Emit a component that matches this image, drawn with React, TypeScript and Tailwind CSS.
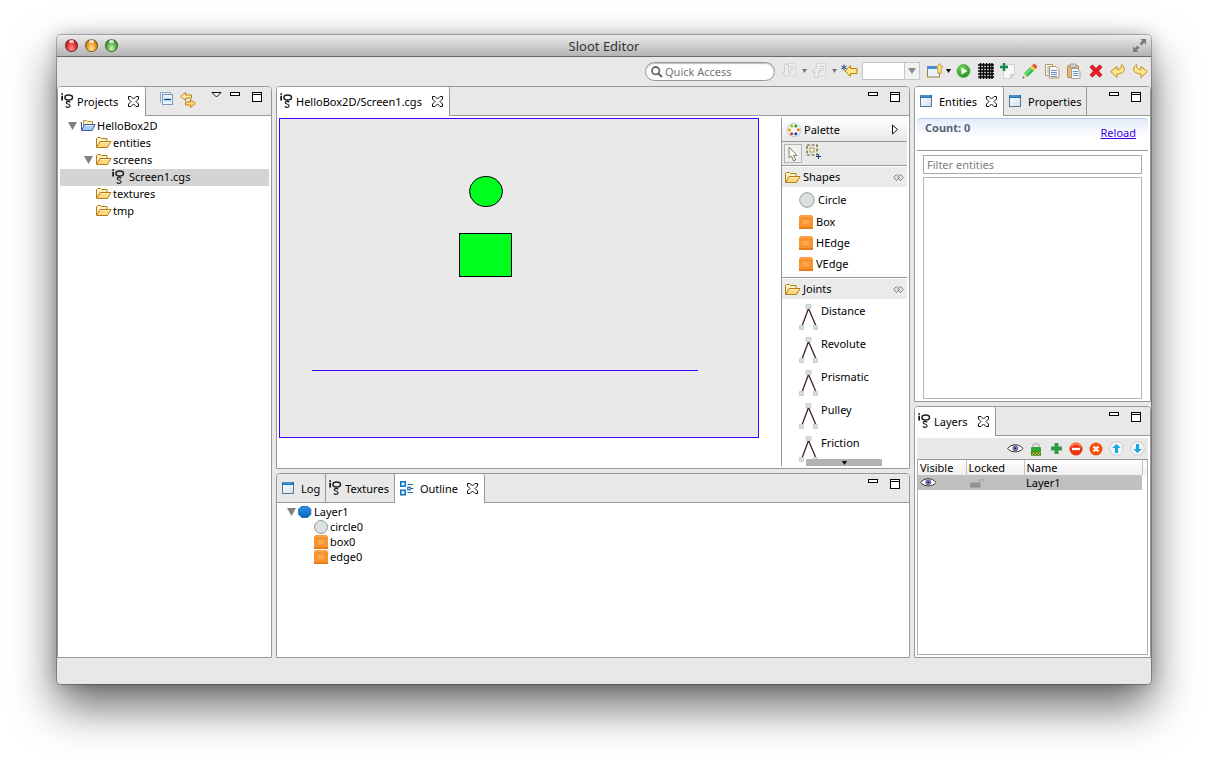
import React from "react";

type Kids = { children?: React.ReactNode };

/* ---------- icons ---------- */

function Svg({ w = 16, h = 16, children }: { w?: number; h?: number } & Kids) {
  return (
    <svg width={w} height={h} viewBox={`0 0 ${w} ${h}`} fill="none" className="block shrink-0" aria-hidden="true">
      {children}
    </svg>
  );
}

const LogoIcon = () => (
  <Svg w={13} h={16}>
    <path d="M.3.300h1.700v1.500H.3zM.3 2.800h1.700v4.700H.3z" fill="#111" />
    <ellipse cx="7.700" cy="4.500" rx="3.800" ry="2.500" stroke="#222" strokeWidth="1.500" />
    <path
      d="M9.200 9.300C8.300 8 5.200 8 5.200 9.700c0 1.600 3.900.900 3.900 3 0 2-3.300 2.300-4.300.700M6.500 7.500l2.500 1.800"
      stroke="#222"
      strokeWidth="1.200"
    />
  </Svg>
);

const WindowIcon = () => (
  <Svg w={13} h={13}>
    <defs>
      <linearGradient id="win" x1="0" y1="0" x2="1" y2="1">
        <stop offset="0" stopColor="#fff" />
        <stop offset="1" stopColor="#cfe0ee" />
      </linearGradient>
    </defs>
    <rect x=".5" y=".5" width="11" height="11" fill="url(#win)" stroke="#5a7896" />
    <path d="M0 0h12v3H0z" fill="#2272b4" />
    <path d="M1 1h9" stroke="#6fb0e4" />
  </Svg>
);

const OutlineIcon = () => (
  <Svg w={14} h={15}>
    <rect x=".75" y=".75" width="4.500" height="4.500" fill="#d9f0ff" stroke="#1277c0" strokeWidth="1.500" />
    <rect x=".75" y="9.250" width="4.500" height="4.500" fill="#d9f0ff" stroke="#1277c0" strokeWidth="1.500" />
    <path d="M7.500 3.500h5.500M7.500 11.500h5.500M11 7.500h2.500" stroke="#1f6cae" />
    <rect x="7.750" y="6.250" width="2.500" height="2.500" stroke="#1f6cae" strokeWidth="1.200" />
  </Svg>
);

const CloseIcon = () => (
  <Svg w={11} h={11}>
    <path
      d="M.5.500h2.500L5.500 3 8 .500h2.500V3L8 5.500l2.500 2.500v2.500H8L5.500 8 3 10.500H.500V8L3 5.500.500 3z"
      fill="#fff"
      stroke="#111"
    />
  </Svg>
);

const FolderIcon = () => (
  <Svg w={16} h={13}>
    <path d="M.500 11V2.500l1-1h3l1 1h5.500V5.500" fill="#fdf0c4" stroke="#b87a14" />
    <path d="M.700 11.500 4 5.500h11l-3.500 6z" fill="#fbd980" stroke="#b87a14" strokeLinejoin="round" />
    <path d="M5 6.500h8.500" stroke="#fff0bc" />
  </Svg>
);

const ProjectIcon = () => (
  <Svg w={16} h={13}>
    <path d="M3.500 6V1.500h3l1 1h5V6" fill="#fdf0c4" stroke="#c09030" />
    <path d="M1.500 11V3.500H.500" stroke="#3c4fa8" />
    <path d="M1.500 11.500 4.500 5.500h10.700l-3 6z" fill="#a9cdf5" stroke="#3c5aa8" strokeLinejoin="round" />
    <path d="M5.500 6.500h7.500" stroke="#e4f1ff" />
  </Svg>
);

const CircleIcon = () => (
  <Svg>
    <circle cx="8" cy="8" r="7.300" fill="#d9e2e0" stroke="#949c9a" />
  </Svg>
);

const SmallCircleIcon = () => (
  <Svg w={14} h={14}>
    <circle cx="7" cy="7" r="6.500" fill="#d9e2e0" stroke="#949c9a" />
  </Svg>
);

const BoxIcon = () => (
  <Svg w={14} h={14}>
    <path d="M1.500 0h11L14 2v12H0V2z" fill="#fa962f" />
    <path d="M0 13h14" stroke="#e87c1a" strokeWidth="2" />
    <path d="M1.500 1h11" stroke="#ffb05c" />
    <rect x="3" y="4" width="8" height="6" fill="#fca94f" stroke="#f4892a" />
  </Svg>
);

const JointIcon = () => (
  <Svg w={20} h={27}>
    <path d="M9.500 4.500 3 22M9.500 4.500 17 22" stroke="#3a2426" strokeWidth="1.300" />
    <path d="M7 .500h5v4H7zM.500 21.500h4v4h-4zM14.500 21.500h4v4h-4z" fill="#d5dedd" stroke="#c4cfce" />
  </Svg>
);

const HexIcon = () => (
  <Svg w={14} h={14}>
    <defs>
      <linearGradient id="hex" x1="0" y1="0" x2="0" y2="1">
        <stop offset="0" stopColor="#2f95e6" />
        <stop offset="1" stopColor="#0a62b4" />
      </linearGradient>
    </defs>
    <path d="M4 1.500h5.500L12.800 4v5.500l-3.300 3H4L.700 9.500V4z" fill="url(#hex)" stroke="#1670c0" />
  </Svg>
);

const EyeIcon = () => (
  <Svg w={17} h={11}>
    <path d="M.700 5.500C4 .500 12.500.500 16 5.500 12.500 10 4 10 .700 5.500z" fill="#fff" stroke="#333" />
    <circle cx="8.300" cy="5.300" r="2.500" fill="#9a86ec" stroke="#444" strokeWidth=".8" />
    <circle cx="8.300" cy="5.300" r="1.100" fill="#1a1060" />
  </Svg>
);

const Expander = () => (
  <Svg w={9} h={8}>
    <path d="M0 0h9L4.500 8z" fill="#808080" />
  </Svg>
);

const Caret = ({ dark = false }: { dark?: boolean }) => (
  <Svg w={5} h={4}>
    <path d="M0 0h5L2.500 4z" fill={dark ? "#000" : "#777"} />
  </Svg>
);

const MinIcon = () => (
  <Svg w={10} h={11}>
    <rect x=".5" y=".5" width="9" height="3" fill="#fff" stroke="#000" />
  </Svg>
);

const MaxIcon = () => (
  <Svg w={10} h={11}>
    <rect x=".5" y=".5" width="9" height="9" fill="#fff" stroke="#000" />
    <path d="M1 2.500h8" stroke="#000" />
  </Svg>
);

const MenuIcon = () => (
  <Svg w={11} h={11}>
    <path d="M1 .500h9L5.500 5z" fill="#fff" stroke="#111" />
  </Svg>
);

const CollapseIcon = () => (
  <Svg w={14} h={14}>
    <path d="M.500 10.500V.500h10v2" fill="#e6eef7" stroke="#8ba7cc" />
    <rect x="2.500" y="2.500" width="10" height="10" fill="#e9f5ff" stroke="#8296b4" />
    <path d="M4 7.500h7" stroke="#0a4f8c" strokeWidth="1.400" />
  </Svg>
);

const LinkIcon = () => (
  <Svg w={17} h={16}>
    <path d="M5.500.500v2.500h6v3h-6v2.500L.700 4.500z" fill="#ffeeb4" stroke="#c08010" />
    <path d="M10.500 7.500V10h-5v3h5v2.500l4.800-4z" fill="#ffdc78" stroke="#c08010" />
  </Svg>
);

const DisabledArrowIcon = ({ up = false }: { up?: boolean }) => (
  <Svg>
    <rect x="5.500" y=".5" width="9" height="12" fill="#eee" stroke="#d8d8d8" />
    <path d="M8 3.500h5M9 5.500h4M9 7.500h4" stroke="#d2d2d2" />
    {up ? (
      <path d="M5.500 4.500 10 9H7.500v5.500h-4V9H1z" fill="#ececec" stroke="#cecece" />
    ) : (
      <path d="M3.500 1.500h4V9H10l-4.500 5L1 9h2.500z" fill="#ececec" stroke="#cecece" />
    )}
  </Svg>
);

const LastEditIcon = () => (
  <Svg w={17} h={14}>
    <path d="M9.500 1.500v3h6.500v5H9.500v3L4 7z" fill="#ffe488" stroke="#bd7e0c" />
    <path d="M3 .500v6M.300 2l5.400 3M5.700 2 .300 5" stroke="#1d4f86" />
  </Svg>
);

const NewWindowIcon = () => (
  <Svg w={17} h={15}>
    <rect x=".5" y="3.500" width="12" height="10.500" fill="#e6f3fc" stroke="#a08040" />
    <path d="M0 3h12v3H0z" fill="#4a90d0" />
    <path
      d="M12.500.500 13.800 3l2.200.800-1.800 1.400v5h-3.400v-5L9 3.800 11.200 3z"
      fill="#ffe680"
      stroke="#b88a1c"
      strokeWidth=".8"
    />
  </Svg>
);

const PlayIcon = () => (
  <Svg>
    <defs>
      <radialGradient id="play" cx=".4" cy=".3" r=".8">
        <stop offset="0" stopColor="#7ed55a" />
        <stop offset="1" stopColor="#148a14" />
      </radialGradient>
    </defs>
    <circle cx="7.500" cy="8" r="6.500" fill="url(#play)" stroke="#4db04a" strokeWidth=".8" />
    <path d="M5.500 4.500v7L11.500 8z" fill="#fff" />
  </Svg>
);

const GridIcon = () => (
  <Svg>
    <path
      d="M2.500 0v16M5.500 0v16M8.500 0v16M11.500 0v16M14 0v16M0 2h16M0 5h16M0 8h16M0 11h16M0 14h16"
      stroke="#000"
      strokeWidth="1.400"
    />
  </Svg>
);

const NewPageIcon = () => (
  <Svg>
    <path d="M3.500 1.500h11v10l-4 4h-7z" fill="#f6f6f4" stroke="#d2d2d0" />
    <path d="M14.500 11.500h-4v4z" fill="#ddd" stroke="#ccc" />
    <path d="M4 0v8M0 4h8" stroke="#0f8a4a" strokeWidth="2.400" />
  </Svg>
);

const PencilIcon = () => (
  <Svg>
    <path d="m2 10.500 7-7 3.500 3.500-7 7z" fill="#2fc04c" />
    <path d="m3.200 11.700 7-7" stroke="#7ee58c" strokeWidth="1.400" />
    <path d="m8.200 4.300 2-2 3.500 3.500-2 2z" fill="#f2d34a" />
    <path d="m10 2.500 1.500-1.500c1-1 4.400 2.400 3.400 3.400L13.500 6z" fill="#e8543a" />
    <path d="m2 10.500 3.500 3.500-4.800 1.300z" fill="#efd6a4" />
    <path d="m1.200 13.500 1.300 1.300-2 .700z" fill="#333" />
  </Svg>
);

const CopyIcon = () => (
  <Svg>
    <path d="M1.500 1.500h7v11h-7z" fill="#fff" stroke="#b29858" />
    <path d="M3 4h4M3 6h4M3 8h4M3 10h4" stroke="#7d9fce" />
    <path d="M5.500 3.500h6.500l3 3v8.500H5.500z" fill="#f4f8fe" stroke="#b29858" />
    <path d="M7 7.500h6M7 9.500h6M7 11.500h6M7 13.500h6" stroke="#6a90c6" />
  </Svg>
);

const PasteIcon = () => (
  <Svg>
    <rect x="1.500" y="2.500" width="11" height="12" rx="1" fill="#e8b873" stroke="#b8853c" />
    <rect x="4" y="1" width="6" height="3.500" rx="1" fill="#d5d5d5" stroke="#888" strokeWidth=".8" />
    <path d="M5.500 5.500h6l2.500 2.500v7.500H5.500z" fill="#f3f8ff" stroke="#a8a08c" />
    <path d="M7 8.500h5.500M7 10.500h5.500M7 12.500h5.500" stroke="#6c95cc" />
  </Svg>
);

const DeleteIcon = () => (
  <Svg w={14} h={14}>
    <path
      d="M1 3 3.500 1 7 4.500 10.500 1 13 3 9.500 7l3.500 4-2.500 2L7 9.500 3.500 13 1 11l3.500-4z"
      fill="#ee1c24"
      stroke="#c81a20"
      strokeLinejoin="round"
    />
  </Svg>
);

const UndoIcon = () => (
  <Svg>
    <path
      d="M7 3.500v3c3 0 5-1.500 4.500-5 3.800 2.500 5 9-4.500 9.500v3.500L.700 8.500z"
      fill="#ffe58c"
      stroke="#c08a1c"
      strokeLinejoin="round"
    />
  </Svg>
);

const RedoIcon = () => (
  <Svg>
    <path
      d="M9 3.500v3c-3 0-5-1.500-4.500-5C.700 4-.500 10.500 9 11v3.500l6.300-6z"
      fill="#ffe58c"
      stroke="#c08a1c"
      strokeLinejoin="round"
    />
  </Svg>
);

const FullscreenIcon = () => (
  <Svg w={15} h={15}>
    <path d="M8.500 1H14v5.500l-1.800-1.800-2.700 2.700-2-2 2.700-2.700zM6.500 14H1V8.500l1.800 1.800 2.700-2.700 2 2-2.700 2.700z" fill="#7a7a7a" />
  </Svg>
);

const SearchIcon = () => (
  <Svg w={12} h={12}>
    <circle cx="4.700" cy="4.700" r="3.700" stroke="#6a6a6a" strokeWidth="1.800" />
    <path d="m7.500 7.500 3.500 3.500" stroke="#6a6a6a" strokeWidth="2.200" />
  </Svg>
);

const PaletteIcon = () => (
  <Svg>
    <circle cx="8" cy="8" r="6.800" fill="#f3f7fc" stroke="#b9cfe8" />
    <circle cx="5.700" cy="4" r="1.600" fill="#9ccc1c" />
    <circle cx="9.800" cy="4" r="1.600" fill="#3a9a1c" />
    <circle cx="3.500" cy="7.800" r="1.600" fill="#f0a810" />
    <circle cx="12.300" cy="7.800" r="1.600" fill="#f08020" />
    <circle cx="5.700" cy="11.800" r="1.600" fill="#d8342c" />
    <circle cx="9.800" cy="11.800" r="1.600" fill="#2350c8" />
  </Svg>
);

const CursorIcon = () => (
  <Svg w={12} h={16}>
    <path d="M2 1v11l2.500-2 2 5 2.200-1-2.200-4.500H10z" fill="#fffff0" stroke="#7f7f68" strokeLinejoin="round" />
  </Svg>
);

const MarqueeIcon = () => (
  <Svg>
    <rect x="1" y="1" width="10" height="10" stroke="#5c5a20" strokeWidth="1.200" strokeDasharray="3 1.500" />
    <rect x="4" y="4" width="4" height="4" fill="#fff9d0" stroke="#a89c50" />
    <path d="M12.500 10v5M10 12.500h5" stroke="#1a3f78" />
  </Svg>
);

const PinIcon = () => (
  <Svg w={11} h={7}>
    <path
      d="M4 .700h-.800L.800 3.500l2.400 2.800H4l2.500-2.800zM7 .700h.800l2.400 2.800-2.400 2.800H7L4.500 3.500z"
      stroke="#777"
      strokeWidth=".9"
    />
  </Svg>
);

const LockIcon = () => (
  <Svg w={12} h={14}>
    <path d="M3 6V3.500C3 1 9 1 9 3.500V6" stroke="#c2c2c2" strokeWidth="1.800" />
    <rect x="1" y="5" width="10" height="8.500" rx="1" fill="#2fa82f" />
    <path d="M1 9.500h10v4H1z" fill="#4a7a18" />
    <path d="m2 13 2.500-3M5 13l2.500-3M8 13l2.500-3" stroke="#f0e03c" />
  </Svg>
);

const AddIcon = () => (
  <Svg w={13} h={13}>
    <path d="M6.500 1v11M1 6.500h11" stroke="#2f9c44" strokeWidth="4" />
  </Svg>
);

const RemoveIcon = () => (
  <Svg w={14} h={14}>
    <circle cx="7" cy="7" r="6.500" fill="#f2300c" />
    <path d="M2 5c2-4 8-4 10 0" stroke="#ff8058" strokeWidth="1.400" />
    <path d="M3 7h8" stroke="#fff" strokeWidth="2.400" />
  </Svg>
);

const CancelIcon = () => (
  <Svg w={14} h={14}>
    <circle cx="7" cy="7" r="6.500" fill="#f2500c" />
    <path d="m4.500 4.500 5 5m0-5-5 5" stroke="#fff" strokeWidth="2" />
  </Svg>
);

const ArrowIcon = ({ down = false }: { down?: boolean }) => (
  <Svg w={15} h={15}>
    <circle cx="7.500" cy="7.500" r="6.800" fill="#f4f4f4" stroke="#ccc" />
    <path d={down ? "M6 3h3v5h2.800L7.500 12 3.200 8H6z" : "M7.500 3 11.800 7H9v5H6V7H3.200z"} fill="#14a8e4" />
  </Svg>
);

const UnlockedIcon = () => (
  <Svg w={17} h={10}>
    <path d="M10 5V3c0-2 4.500-2 4.500 0v1" stroke="#acacac" strokeWidth="1.400" />
    <rect x="1" y="4.500" width="10.500" height="5" fill="#949494" />
    <path d="M1.500 8.500h9.500" stroke="#7c7c7c" strokeDasharray="1 1" />
  </Svg>
);

/* ---------- panel parts ---------- */

function IconButton({ label, className = "", children }: { label: string; className?: string } & Kids) {
  return (
    <button type="button" aria-label={label} className={`flex shrink-0 items-center justify-center ${className}`}>
      {children}
    </button>
  );
}

type TabProps = { icon: React.ReactNode; label: string; active?: boolean; logo?: boolean };

function Tab({ icon, label, active, logo }: TabProps) {
  return (
    <div
      className={`flex h-full shrink-0 items-center border-r border-[#989898] ${
        active ? "rounded-tr-[3px] bg-white pr-1.5 pb-px" : "border-b pr-[5px]"
      } ${logo ? "gap-[3px] pl-[3px]" : "gap-[6px] pl-[5px]"}`}
    >
      {icon}
      <button type="button" role="tab" aria-selected={!!active} className="pt-px leading-4">
        {label}
      </button>
      {active && (
        <IconButton label={`Close ${label}`} className={logo ? "ml-[7px]" : "ml-[3px]"}>
          <CloseIcon />
        </IconButton>
      )}
    </div>
  );
}

function Panel({ tabs, tools, children }: { tabs: TabProps[]; tools?: React.ReactNode } & Kids) {
  return (
    <section className="flex min-h-0 min-w-0 flex-col rounded-t-[4px] border border-[#989898] bg-white">
      <div className="flex h-[29px] shrink-0 overflow-hidden rounded-t-[3px] bg-[#e8e8e8]">
        <div role="tablist" className="flex h-full">
          {tabs.map((t) => (
            <Tab key={t.label} {...t} />
          ))}
        </div>
        <div className="flex flex-1 items-start justify-end border-b border-[#989898] pt-[5px] pr-[9px]">
          {tools}
          <IconButton label="Minimize" className="mr-3">
            <MinIcon />
          </IconButton>
          <IconButton label="Maximize">
            <MaxIcon />
          </IconButton>
        </div>
      </div>
      {children}
    </section>
  );
}

function PaletteHeader({ label }: { label: string }) {
  return (
    <button type="button" className="flex h-5 w-full shrink-0 items-center bg-[#ebebeb] pr-[3px] pl-[3px]">
      <FolderIcon />
      <span className="ml-[2px] flex-1 text-left">{label}</span>
      <PinIcon />
    </button>
  );
}

/* ---------- panels ---------- */

const tree = [
  { label: "HelloBox2D", pad: "pl-2", icon: <ProjectIcon />, open: true },
  { label: "entities", pad: "pl-6", icon: <FolderIcon /> },
  { label: "screens", pad: "pl-6", icon: <FolderIcon />, open: true },
  { label: "Screen1.cgs", pad: "pl-10", icon: <LogoIcon />, selected: true },
  { label: "textures", pad: "pl-6", icon: <FolderIcon /> },
  { label: "tmp", pad: "pl-6", icon: <FolderIcon /> },
];

function Projects() {
  return (
    <Panel
      tabs={[{ icon: <LogoIcon />, label: "Projects", active: true, logo: true }]}
      tools={
        <>
          <IconButton label="Collapse all" className="mr-1.5">
            <CollapseIcon />
          </IconButton>
          <IconButton label="Link with editor" className="mr-3.5">
            <LinkIcon />
          </IconButton>
          <IconButton label="View menu" className="mr-2">
            <MenuIcon />
          </IconButton>
        </>
      }
    >
      <ul role="tree" className="p-[2px]">
        {tree.map((n) => (
          <li
            key={n.label}
            role="treeitem"
            aria-selected={!!n.selected}
            className={`flex h-[17px] items-center pb-[2px] ${n.pad} ${n.selected ? "bg-[#d4d4d4]" : ""}`}
          >
            <span className="w-3">{n.open && <Expander />}</span>
            <span className="w-[17px]">{n.icon}</span>
            {n.label}
          </li>
        ))}
      </ul>
    </Panel>
  );
}

function Editor() {
  return (
    <Panel tabs={[{ icon: <LogoIcon />, label: "HelloBox2D/Screen1.cgs", active: true, logo: true }]}>
      <div className="flex min-h-0 flex-1 justify-between p-[2px]">
        <div className="min-w-0 overflow-hidden">
          <svg width="480" height="320" viewBox="0 0 480 320" className="block" role="img" aria-label="Screen canvas">
            <rect x=".5" y=".5" width="479" height="319" fill="#e9e9e9" stroke="#4000ff" />
            <ellipse cx="207" cy="73.500" rx="16.500" ry="15" fill="#00ff1e" stroke="#000" />
            <rect x="180.500" y="115.500" width="52" height="43" fill="#00ff1e" stroke="#000" />
            <path d="M33 252.500h386" stroke="#4000ff" />
          </svg>
        </div>
        <div className="relative flex w-[126px] shrink-0 flex-col overflow-hidden border-l border-[#989898]">
          <div className="flex h-6 shrink-0 items-center border-b border-[#989898] bg-linear-to-b from-white to-[#e8e8e8] pr-2 pl-1">
            <PaletteIcon />
            <span className="ml-[2px] flex-1">Palette</span>
            <IconButton label="Collapse palette">
              <Svg w={8} h={11}>
                <path d="M1.500 1v9l5-4.500z" fill="#fff" stroke="#111" />
              </Svg>
            </IconButton>
          </div>
          <div className="flex h-6 shrink-0 items-start gap-1 border-b border-[#989898] bg-[#e8e8e8] px-[2px] pt-[2px]">
            <IconButton label="Select" className="h-[19px] w-[18px] border border-[#b4b4b4] bg-[#f0f0f0]">
              <CursorIcon />
            </IconButton>
            <IconButton label="Marquee">
              <MarqueeIcon />
            </IconButton>
          </div>
          <div className="shrink-0 border-b border-[#989898] pt-px pb-[3px]">
            <PaletteHeader label="Shapes" />
            <div className="flex flex-col pt-px pr-4 pl-[17px]">
              <button type="button" className="flex h-[23px] items-center gap-[3px]">
                <CircleIcon />
                Circle
              </button>
              {["Box", "HEdge", "VEdge"].map((s) => (
                <button type="button" key={s} className="flex h-[21px] items-center gap-[3px]">
                  <BoxIcon />
                  {s}
                </button>
              ))}
            </div>
          </div>
          <div className="min-h-0 flex-1 overflow-hidden pt-px">
            <PaletteHeader label="Joints" />
            <div className="flex flex-col pt-[5px] pr-4 pl-[17px]">
              {["Distance", "Revolute", "Prismatic", "Pulley", "Friction"].map((s) => (
                <button type="button" key={s} className="flex h-[33px] shrink-0 items-start gap-[2px]">
                  <JointIcon />
                  {s}
                </button>
              ))}
            </div>
          </div>
          <button
            type="button"
            aria-label="Scroll down"
            className="absolute bottom-0 left-6 flex h-[7px] w-[76px] items-center justify-center bg-[#b2b2b2]"
          >
            <Caret dark />
          </button>
        </div>
      </div>
    </Panel>
  );
}

function Outline() {
  return (
    <Panel
      tabs={[
        { icon: <WindowIcon />, label: "Log" },
        { icon: <LogoIcon />, label: "Textures", logo: true },
        { icon: <OutlineIcon />, label: "Outline", active: true },
      ]}
    >
      <ul role="tree" className="px-[10px] pt-px">
        <li role="treeitem" className="flex h-[15px] items-center">
          <Expander />
          <span className="mr-[2px] ml-[2px]">
            <HexIcon />
          </span>
          Layer1
        </li>
        {["circle0", "box0", "edge0"].map((s, i) => (
          <li key={s} role="treeitem" className="flex h-[15px] items-center pl-[27px]">
            <span className="w-4">{i === 0 ? <SmallCircleIcon /> : <BoxIcon />}</span>
            {s}
          </li>
        ))}
      </ul>
    </Panel>
  );
}

function Entities() {
  return (
    <Panel
      tabs={[
        { icon: <WindowIcon />, label: "Entities", active: true },
        { icon: <WindowIcon />, label: "Properties" },
      ]}
    >
      <div className="flex min-h-0 flex-1 flex-col p-[2px]">
        <div className="flex h-[33px] shrink-0 justify-between rounded-t-[4px] border-t border-b border-t-[#b4c8ec] border-b-[#989898] bg-linear-to-b from-[#e4ecfa] to-white to-60% pr-3 pl-2">
          <span className="pt-px leading-4 font-bold text-[#566375]">Count: 0</span>
          <a href="#reload" className="pt-1.5 leading-4 text-[#3a00e8] underline">
            Reload
          </a>
        </div>
        <div className="flex min-h-0 flex-1 flex-col gap-[3px] px-1.5 pt-1">
          <input
            aria-label="Filter entities"
            placeholder="Filter entities"
            className="h-[19px] w-full shrink-0 border border-[#a8a8a8] bg-white px-[3px] outline-none placeholder:text-[#808080]"
          />
          <div role="listbox" aria-label="Entities" className="flex-1 border border-[#b4b4b4]" />
        </div>
      </div>
    </Panel>
  );
}

function Layers() {
  return (
    <Panel tabs={[{ icon: <LogoIcon />, label: "Layers", active: true, logo: true }]}>
      <div className="flex min-h-0 flex-1 flex-col p-[2px]">
        <div className="flex h-[21px] shrink-0 items-center justify-end bg-[#e8e8e8]">
          <IconButton label="Show" className="w-[22px]"><EyeIcon /></IconButton>
          <IconButton label="Lock" className="w-5"><LockIcon /></IconButton>
          <IconButton label="Add" className="w-5"><AddIcon /></IconButton>
          <IconButton label="Remove" className="w-5"><RemoveIcon /></IconButton>
          <IconButton label="Clear" className="w-5"><CancelIcon /></IconButton>
          <IconButton label="Move up" className="w-[21px]"><ArrowIcon /></IconButton>
          <IconButton label="Move down" className="w-[21px]"><ArrowIcon down /></IconButton>
        </div>
        <div className="flex-1 border border-[#b0b0b0] border-t-[#989898]">
          <table className="w-full table-fixed border-collapse text-left leading-[15px]">
            <thead>
              <tr className="h-[15px] bg-linear-to-b from-white to-[#efefef]">
                <th className="w-12 border-r border-[#c4c4c4] p-0 pl-[2px] font-normal">Visible</th>
                <th className="w-[58px] border-r border-[#c4c4c4] p-0 pl-[2px] font-normal">Locked</th>
                <th className="border-r border-[#c4c4c4] p-0 pl-[2px] font-normal">Name</th>
                <th className="w-[5px] p-0" aria-label="Spacer" />
              </tr>
            </thead>
            <tbody>
              <tr className="h-[15px]">
                <td className="bg-[#c0c0c0] p-0 pl-[2px]"><EyeIcon /></td>
                <td className="bg-[#c0c0c0] p-0 pl-[3px]"><UnlockedIcon /></td>
                <td className="bg-[#c0c0c0] p-0 pl-[2px]">Layer1</td>
                <td className="p-0" />
              </tr>
            </tbody>
          </table>
        </div>
      </div>
    </Panel>
  );
}

/* ---------- window ---------- */

const lights = [
  { label: "Close window", c: "bg-radial-[at_50%_80%] from-[#ff9a90] via-[#e8383c] to-[#8e1a1c]" },
  { label: "Minimize window", c: "bg-radial-[at_50%_80%] from-[#ffe890] via-[#f0a030] to-[#96601a]" },
  { label: "Zoom window", c: "bg-radial-[at_50%_80%] from-[#ccf5b0] via-[#62b850] to-[#346c30]" },
];

const actions = [
  { label: "Run", icon: <PlayIcon /> },
  { label: "Toggle grid", icon: <GridIcon /> },
  { label: "New entity", icon: <NewPageIcon /> },
  { label: "Edit", icon: <PencilIcon /> },
  { label: "Copy", icon: <CopyIcon /> },
  { label: "Paste", icon: <PasteIcon /> },
  { label: "Delete", icon: <DeleteIcon /> },
  { label: "Undo", icon: <UndoIcon /> },
  { label: "Redo", icon: <RedoIcon /> },
];

export default function App() {
  return (
    <div className="flex h-screen min-h-[640px] min-w-[1100px] overflow-hidden bg-white px-[57px] pt-[35px] pb-[79px] font-['Noto_Sans','Open_Sans',sans-serif] text-[11px] leading-[14px] text-black">
      <div className="flex min-w-0 flex-1 flex-col rounded-[4px] bg-[#e8e8e8] shadow-[0_0_0_1px_rgba(0,0,0,0.25),0_22px_46px_rgba(0,0,0,0.6),0_0_16px_rgba(0,0,0,0.2)]">
        <header className="grid h-[22px] shrink-0 grid-cols-[1fr_auto_1fr] items-center rounded-t-[4px] border-b border-[#6a6a6a] bg-linear-to-b from-[#ececec] to-[#b4b4b4] px-2">
          <div className="flex gap-[7px]">
            {lights.map((l) => (
              <button
                key={l.label}
                type="button"
                aria-label={l.label}
                className={`relative size-[13px] rounded-full border border-black/40 ${l.c}`}
              >
                <span className="absolute top-0 left-[3px] h-[3px] w-[5px] rounded-full bg-white/70" />
              </button>
            ))}
          </div>
          <h1 className="text-[13px] leading-4 text-[#333]">Sloot Editor</h1>
          <IconButton label="Full screen" className="-mr-1 justify-self-end">
            <FullscreenIcon />
          </IconButton>
        </header>

        <div className="flex h-[29px] shrink-0 items-center justify-end">
          <label className="mr-[6px] flex h-[19px] w-[130px] items-center gap-[2px] rounded-full border border-[#999] bg-white pl-[5px] shadow-[inset_0_1px_1px_rgba(0,0,0,0.25)]">
            <SearchIcon />
            <input
              aria-label="Quick Access"
              placeholder="Quick Access"
              className="w-full min-w-0 bg-transparent outline-none placeholder:text-[#737373]"
            />
          </label>
          <div className="flex items-center pb-[2px]">
            <IconButton label="Next annotation"><DisabledArrowIcon /></IconButton>
            <IconButton label="Next annotation menu" className="w-[14px]"><Caret /></IconButton>
            <IconButton label="Previous annotation"><DisabledArrowIcon up /></IconButton>
            <IconButton label="Previous annotation menu" className="w-[14px]"><Caret /></IconButton>
            <IconButton label="Last edit location"><LastEditIcon /></IconButton>
            <div className="mr-[7px] ml-1 flex h-[18px] w-[58px] border border-[#c4c4c4]">
              <input aria-label="Zoom level" className="min-w-0 flex-1 bg-white outline-none" />
              <button
                type="button"
                aria-label="Zoom options"
                className="flex w-[15px] items-center justify-center border-l border-[#c4c4c4] bg-[#f2f2f2]"
              >
                <Svg w={8} h={6}>
                  <path d="M0 0h8L4 6z" fill="#8c8c8c" />
                </Svg>
              </button>
            </div>
            <IconButton label="New"><NewWindowIcon /></IconButton>
            <IconButton label="New menu" className="w-[9px]"><Caret dark /></IconButton>
            {actions.map((a) => (
              <IconButton key={a.label} label={a.label} className="w-[22px]">
                {a.icon}
              </IconButton>
            ))}
          </div>
        </div>

        <main className="grid min-h-0 flex-1 grid-cols-[215px_minmax(0,1fr)_237px] gap-1">
          <Projects />
          <div className="grid min-h-0 grid-rows-[minmax(0,383fr)_minmax(0,185fr)] gap-1">
            <Editor />
            <Outline />
          </div>
          <div className="grid min-h-0 grid-rows-[minmax(0,316fr)_minmax(0,252fr)] gap-1">
            <Entities />
            <Layers />
          </div>
        </main>
        <footer className="h-[26px] shrink-0" />
      </div>
    </div>
  );
}
